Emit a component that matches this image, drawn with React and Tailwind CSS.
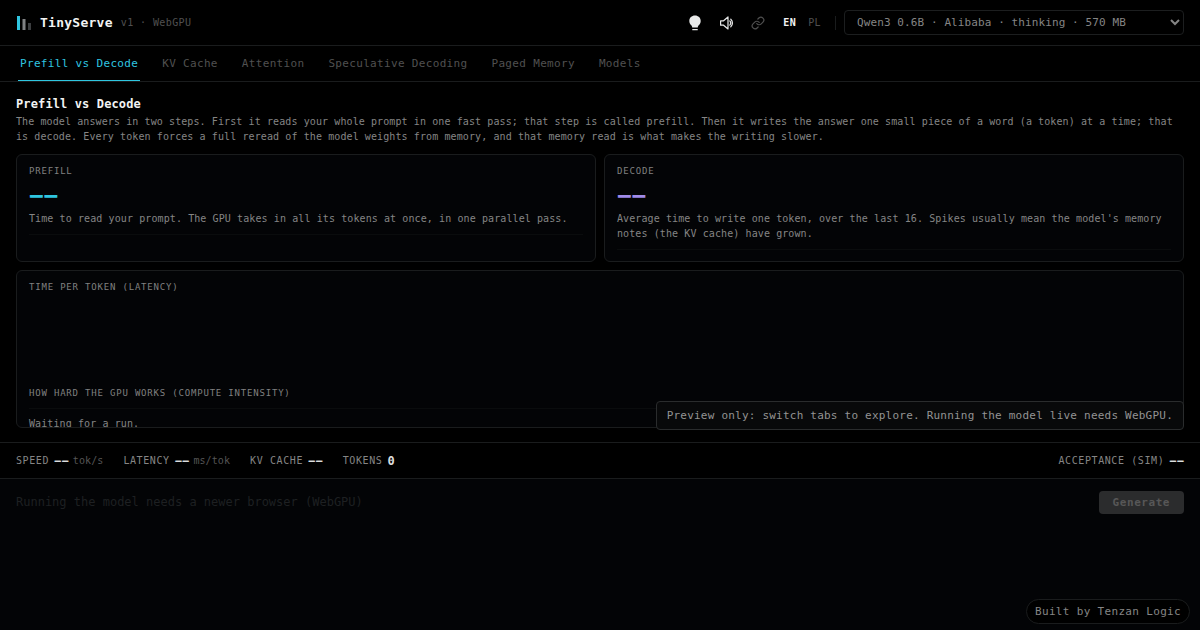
import React, { Component } from 'react';

const tabs = ['Prefill vs Decode', 'KV Cache', 'Attention', 'Speculative Decoding', 'Paged Memory', 'Models'];

const models = ['Qwen3 0.6B · Alibaba · thinking · 570 MB'];

const stats = [
  { label: 'SPEED', value: '−−', unit: 'tok/s' },
  { label: 'LATENCY', value: '−−', unit: 'ms/tok' },
  { label: 'KV CACHE', value: '−−' },
  { label: 'TOKENS', value: '0' },
];

function Logo() {
  return (
    <svg width="16" height="16" viewBox="0 0 16 16" aria-hidden="true">
      <rect x="1" y="1" width="3" height="14" fill="#2fc6e0" />
      <rect x="6.500" y="4" width="3" height="11" fill="#808284" />
      <rect x="12" y="8" width="3" height="7" fill="#3c3e40" />
    </svg>
  );
}

function BulbIcon() {
  return (
    <svg width="16" height="16" viewBox="0 0 16 16" fill="currentColor" aria-hidden="true">
      <path d="M8 .6C4.700.6 2.300 2.900 2.300 6c0 1.700.7 3 1.700 4 .8.8 1.200 1.500 1.200 2.600h5.600c0-1.100.4-1.800 1.200-2.600 1-1 1.700-2.300 1.700-4C13.700 2.900 11.300.6 8 .6z" />
      <rect x="5.200" y="14" width="5.600" height="1.300" rx=".5" />
    </svg>
  );
}

function SpeakerIcon() {
  return (
    <svg width="16" height="16" viewBox="0 0 16 16" fill="none" stroke="currentColor" strokeWidth="1.2" strokeLinejoin="round" strokeLinecap="round" aria-hidden="true">
      <path d="M1.600 5.800h3L9 2v12L4.600 10.200h-3z" />
      <path d="M10.800 5.900a3 3 0 0 1 0 4.200" />
      <path d="M11.800 4.200a5.200 5.200 0 0 1 0 7.600" />
    </svg>
  );
}

function LinkIcon() {
  return (
    <svg width="14" height="14" viewBox="0 0 24 24" fill="none" stroke="currentColor" strokeWidth="2" strokeLinecap="round" strokeLinejoin="round" aria-hidden="true">
      <path d="M10 13a5 5 0 0 0 7.540.54l3-3a5 5 0 0 0-7.070-7.070l-1.720 1.710" />
      <path d="M14 11a5 5 0 0 0-7.540-.54l-3 3a5 5 0 0 0 7.070 7.070l1.710-1.710" />
    </svg>
  );
}

function Stat({ label, value, unit }) {
  return (
    <div className="flex items-center">
      <span className="tracking-[0.06em] text-[#858585]">{label}</span>
      <span className="ml-[5px] text-xs font-bold text-[#dcdedf]">{value}</span>
      {unit && <span className="ml-1 text-[#555]">{unit}</span>}
    </div>
  );
}

function Label({ children }) {
  return <h2 className="text-[9px] leading-3 tracking-[0.09em] text-[#808080]">{children}</h2>;
}

function MetricCard({ label, valueClass, text }) {
  return (
    <section className="min-h-27 rounded-md border border-[#1a1c1d] bg-[#030406] px-3 py-[10px]">
      <Label>{label}</Label>
      <p className={'mt-1 text-2xl leading-[30px] font-bold ' + valueClass}>−−</p>
      <p>{text}</p>
      <div className="mt-2 h-px bg-[#0a0c0d]"></div>
    </section>
  );
}

export default class App extends Component {
  constructor() {
    super();
    this.state = {
      tab: tabs[0],
      lang: 'EN',
    };
  }

  render() {
    return (
      <div className="flex h-screen flex-col bg-black font-['DejaVu_Sans_Mono',monospace] text-[10px] leading-[15px] tracking-[0.01em] text-[#858585]">
        <header className="flex h-[46px] shrink-0 items-center border-b border-[#1a1c1d] px-4">
          <Logo />
          <h1 className="ml-2 text-[13px] leading-4 font-bold tracking-[0.02em] text-[#f2f3f3]">TinyServe</h1>
          <span className="ml-2 tracking-[0.04em] text-[#505050]">v1 · WebGPU</span>
          <div className="ml-auto flex items-center">
            <button aria-label="Light mode" className="text-[#e8e9e9]"><BulbIcon /></button>
            <button aria-label="Sound" className="ml-4 text-[#e8e9e9]"><SpeakerIcon /></button>
            <button aria-label="Copy link" className="ml-4 text-[#505050]"><LinkIcon /></button>
            <div className="ml-[18px] flex gap-3 tracking-[0.04em]">
              {['EN', 'PL'].map((lang) => (
                <button
                  key={lang}
                  onClick={() => this.setState({ lang })}
                  className={this.state.lang == lang ? 'font-bold text-[#f2f3f3]' : 'text-[#505050]'}
                >
                  {lang}
                </button>
              ))}
            </div>
            <div className="mr-2 ml-3.5 h-3.5 w-px bg-[#1a1c1d]"></div>
            <select aria-label="Model" className="h-[25px] w-[340px] rounded border border-[#1c1e1f] bg-black px-2 text-[11px] text-[#858585]">
              {models.map((m) => <option key={m}>{m}</option>)}
            </select>
          </div>
        </header>

        <nav className="flex h-9 shrink-0 gap-5 border-b border-[#1a1c1d] px-[18px] text-[11px]">
          {tabs.map((tab) => (
            <button
              key={tab}
              onClick={() => this.setState({ tab })}
              className={
                'border-b px-0.5 tracking-[0.03em] ' +
                (this.state.tab == tab ? 'border-[#2fc6e0] text-[#2fc6e0]' : 'border-transparent text-[#505050]')
              }
            >
              {tab}
            </button>
          ))}
        </nav>

        <main className="relative flex min-h-0 flex-1 flex-col px-4 py-[14px]">
          <h2 className="text-xs leading-4 font-bold tracking-[0.01em] text-[#f2f3f3]">{this.state.tab}</h2>
          <p className="mt-0.5">
            The model answers in two steps. First it reads your whole prompt in one fast pass; that step is called prefill. Then it
            writes the answer one small piece of a word (a token) at a time; that is decode. Every token forces a full reread of
            the model weights from memory, and that memory read is what makes the writing slower.
          </p>
          <div className="mt-[10px] grid grid-cols-2 gap-2">
            <MetricCard
              label="PREFILL"
              valueClass="text-[#2fc6e0]"
              text="Time to read your prompt. The GPU takes in all its tokens at once, in one parallel pass."
            />
            <MetricCard
              label="DECODE"
              valueClass="text-[#a08be8]"
              text="Average time to write one token, over the last 16. Spikes usually mean the model's memory notes (the KV cache) have grown."
            />
          </div>
          <section className="mt-2 min-h-0 flex-1 overflow-hidden rounded-md border border-[#1a1c1d] bg-[#030406] px-3 py-[10px]">
            <Label>TIME PER TOKEN (LATENCY)</Label>
            <div className="h-[94px]"></div>
            <Label>HOW HARD THE GPU WORKS (COMPUTE INTENSITY)</Label>
            <div className="mt-[9px] h-px bg-[#0a0c0d]"></div>
            <p className="mt-[7px]">Waiting for a run.</p>
          </section>
          <div role="status" className="absolute right-4 bottom-3 rounded border border-[#2a2c2d] bg-[#08090a] px-[10px] py-1.5 text-[11px] tracking-[0.02em] text-[#939393]">
            Preview only: switch tabs to explore. Running the model live needs WebGPU.
          </div>
        </main>

        <div className="flex h-9 shrink-0 items-center gap-5 border-t border-[#1a1c1d] px-4">
          {stats.map((s) => <Stat key={s.label} {...s} />)}
          <div className="ml-auto">
            <Stat label="ACCEPTANCE (SIM)" value="−−" />
          </div>
        </div>

        <footer className="flex h-38 shrink-0 items-start gap-3 border-t border-[#1a1c1d] bg-[#030406] px-4 py-3">
          <input
            type="text"
            disabled
            aria-label="Prompt"
            placeholder="Running the model needs a newer browser (WebGPU)"
            className="h-[22px] min-w-0 flex-1 bg-transparent text-xs tracking-normal placeholder:text-[#1e2022]"
          />
          <button disabled className="h-[23px] rounded bg-[#2b2c2d] px-3.5 text-[11px] font-bold tracking-[0.05em] text-[#575757]">
            Generate
          </button>
        </footer>

        <a href="#" className="fixed right-[10px] bottom-1.5 rounded-full border border-[#1a1c1d] bg-black px-2 py-1 text-[11px] tracking-[0.03em] text-[#858585]">
          Built by Tenzan Logic
        </a>
      </div>
    );
  }
}
